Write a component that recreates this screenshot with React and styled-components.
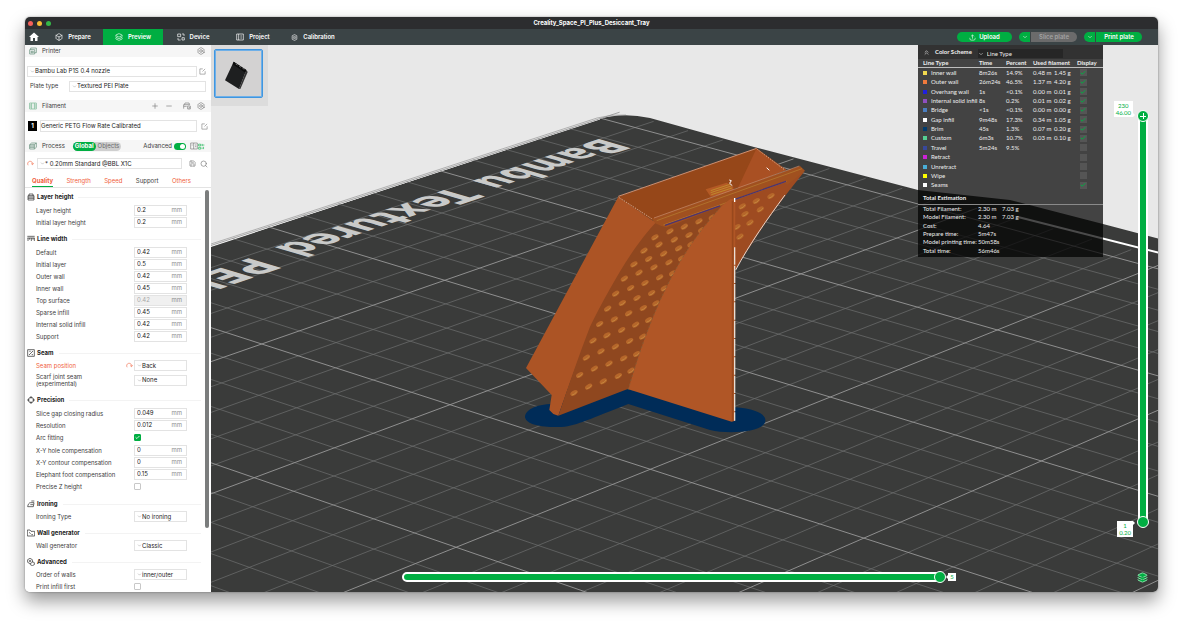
import React, { useState } from "react";
import styled, { createGlobalStyle, ThemeProvider, css } from "styled-components";
import {
  Bolt,
  Box,
  Check,
  ChevronDown,
  ChevronsUp,
  Layers,
  Minus,
  Plus,
  Save,
  Search,
} from "lucide-react";
import { MdHome } from "react-icons/md";

const theme = {
  colors: {
    green: "#00ae42",
    orange: "#f0603c",
    titlebar: "#2c2d2f",
    navbar: "#3b4446",
    text: "#3c3c3c",
    muted: "#8c8c8c",
    line: "#e3e3e3",
    header: "#f6f6f6",
  },
};

const GlobalStyle = createGlobalStyle`
  * { box-sizing: border-box; }
  body {
    margin: 0;
    background-color: #fff;
    font-family: Inter, "Liberation Sans", sans-serif;
    font-size: 6px;
    line-height: 8px;
    color: #3c3c3c;
  }
  button, input, select {
    font: inherit;
    color: inherit;
    margin: 0;
    padding: 0;
    border: 0;
    background: none;
  }
  svg { flex: none; display: block; }
`;

const App = () => {
  return (
    <ThemeProvider theme={theme}>
      <GlobalStyle />
      <Page>
        <Window>
          <TitleBar />
          <NavBar />
          <Main>
            <Sidebar />
            <Viewport />
          </Main>
        </Window>
      </Page>
    </ThemeProvider>
  );
};

export default App;

// [Glyph]--------------------------------------------------------------------------------------------
const shapes = {
  upload: "M12 16V3M7 8l5-5 5 5M3 13v3a5 5 0 0 0 5 5h8a5 5 0 0 0 5-5v-3",
  device: "M2 3h9v8H2zM15 14h7v7h-7zM15 3h6v6M3 15v6h8",
  project: "M2 3h20v18H2zM8 3v18M13 9h5M13 15h5",
  calibration: "M12 2l8 4v12l-8 4-8-4V6zM12 8a4 4 0 1 0 0 8a4 4 0 1 0 0-8M12 11v2",
  printer: "M2 8h15v13H2zM5 8V3h17v14h-5M6 13h7v4H6z",
  filament: "M2 3h20v18H2zM8 3v18M16 3v18M2 9h6M2 15h6M16 9h6M16 15h6",
  process: "M2 8h14v13H2zM2 8l6-5h14l-6 5M22 3v13l-6 5M2 12h14M2 16h14",
  edit: "M13 3H3v18h18V11M12 12l9-9",
  ams: "M2 20V8h18M4 8l2-5h12l2 5M2 13h9M14 12l8 0v9h-8zM16 17l2 2 3-4",
  compare: "M2 3h20v18H2zM11 3v18M15 9h4M15 14h4M5 9h3",
  params: "M2 4h7v6H2zM2 15h7v6H2zM14 3v8M14 7h8M14 15v6M19 13v8",
  reset: "M4 18a8.500 8.500 0 1 1 15-3M14 12l5 4 4-5",
  height: "M3 8h18v13H3zM3 12h18M3 16h18M6 8V3h12v5",
  width: "M1 4h22M1 9h22M3 9v9M8 9v5M13 9v9M18 9v5M22 9v9",
  seam: "M2 2h20v20H2zM6 18L18 6M7 7h4M14 17h4",
  precision: "M12 4a8 8 0 1 0 0 16a8 8 0 1 0 0-16M12 0v8M12 16v8M0 12h8M16 12h8",
  ironing: "M2 20h17l2-12H11C6 8 3 13 2 20zM10 14h9M13 3h9",
  wall: "M1 3h8l3 4h11v14H1zM6 10l5 4M13 17h5",
  advanced: "M9 1l7 4v8l-7 4-7-4V5zM9 6v6M6 9h6M16 11l6 3v6l-6 3-6-3v-3",
};

const Glyph = ({ name, size = 8, color = "currentColor" }) => {
  return (
    <svg width={size} height={size} viewBox="0 0 24 24" fill="none" stroke={color} strokeWidth="2">
      <path d={shapes[name]} />
    </svg>
  );
};

// [Window]--------------------------------------------------------------------------------------------
const Page = styled.div`
  display: flex;
  height: 100vh;
  padding: 17px 25px 33px;
`;

const Window = styled.div`
  display: flex;
  flex-direction: column;
  flex: 1;
  min-width: 0;
  overflow: hidden;
  border-radius: 5px;
  background-color: #fff;
  box-shadow: 0 9px 18px rgba(0, 0, 0, 0.4), 0 0 2px rgba(0, 0, 0, 0.4);
`;

const Main = styled.main`
  display: flex;
  flex: 1;
  min-height: 0;
`;

// [TitleBar]--------------------------------------------------------------------------------------------
const TitleBar = () => {
  return (
    <TitleBarWrapper>
      <Lights>
        <Light $color="#f4605a" />
        <Light $color="#f8bd35" />
        <Light $color="#35b747" />
      </Lights>
      <Title>Creality_Space_PI_Plus_Desiccant_Tray</Title>
    </TitleBarWrapper>
  );
};

const TitleBarWrapper = styled.header`
  display: grid;
  grid-template-columns: 1fr auto 1fr;
  align-items: center;
  flex: none;
  height: 12px;
  padding: 0 3px;
  background-color: ${({ theme }) => theme.colors.titlebar};
`;

const Lights = styled.div`
  display: flex;
  gap: 4px;
`;

const Light = styled.span`
  width: 5px;
  height: 5px;
  border-radius: 50%;
  background-color: ${({ $color }) => $color};
`;

const Title = styled.h1`
  margin: 0;
  font-size: 6px;
  font-weight: 700;
  color: #fff;
`;

// [NavBar]--------------------------------------------------------------------------------------------
const NavBar = () => {
  return (
    <NavWrapper>
      <HomeButton aria-label="Home">
        <MdHome size={12} />
      </HomeButton>
      <NavTab><Box size={8} />Prepare</NavTab>
      <NavTab $active><Layers size={8} />Preview</NavTab>
      <NavTab><Glyph name="device" />Device</NavTab>
      <NavTab><Glyph name="project" />Project</NavTab>
      <NavTab><Glyph name="calibration" size={7} />Calibration</NavTab>
      <Actions>
        <Pill><Glyph name="upload" size={7} />Upload</Pill>
        <SplitButton>
          <PillArrow aria-label="Slice options"><ChevronDown size={6} /></PillArrow>
          <PillEnd $disabled>Slice plate</PillEnd>
        </SplitButton>
        <SplitButton>
          <PillArrow aria-label="Print options"><ChevronDown size={6} /></PillArrow>
          <PillEnd>Print plate</PillEnd>
        </SplitButton>
      </Actions>
    </NavWrapper>
  );
};

const NavWrapper = styled.nav`
  display: flex;
  flex: none;
  height: 16px;
  background-color: ${({ theme }) => theme.colors.navbar};
  color: #fff;
`;

const HomeButton = styled.button`
  display: flex;
  justify-content: center;
  align-items: center;
  width: 18px;
`;

const NavTab = styled.button`
  display: flex;
  justify-content: center;
  align-items: center;
  gap: 5px;
  width: 60px;
  font-weight: 600;
  background-color: ${({ $active, theme }) => ($active ? theme.colors.green : "transparent")};
`;

const Actions = styled.div`
  display: flex;
  align-items: center;
  gap: 7px;
  margin-left: auto;
  padding-right: 16px;
`;

const SplitButton = styled.div`
  display: flex;
  gap: 1px;
`;

const pill = css`
  display: flex;
  justify-content: center;
  align-items: center;
  height: 10px;
  font-weight: 600;
  background-color: ${({ theme, $disabled }) => ($disabled ? "#6b6b6b" : theme.colors.green)};
  color: ${({ $disabled }) => ($disabled ? "#a3a3a3" : "#fff")};
`;

const Pill = styled.button`
  ${pill}
  gap: 3px;
  width: 55px;
  border-radius: 5px;
`;

const PillArrow = styled.button`
  ${pill}
  width: 11px;
  border-radius: 5px 0 0 5px;
`;

const PillEnd = styled.button`
  ${pill}
  width: 46px;
  border-radius: 0 5px 5px 0;
`;

// [Sidebar]--------------------------------------------------------------------------------------------
const groups = [
  {
    title: "Layer height",
    icon: "height",
    rows: [
      { label: "Layer height", value: "0.2" },
      { label: "Initial layer height", value: "0.2" },
    ],
  },
  {
    title: "Line width",
    icon: "width",
    rows: [
      { label: "Default", value: "0.42" },
      { label: "Initial layer", value: "0.5" },
      { label: "Outer wall", value: "0.42" },
      { label: "Inner wall", value: "0.45" },
      { label: "Top surface", value: "0.42", disabled: true },
      { label: "Sparse infill", value: "0.45" },
      { label: "Internal solid infill", value: "0.42" },
      { label: "Support", value: "0.42" },
    ],
  },
  {
    title: "Seam",
    icon: "seam",
    rows: [
      { label: "Seam position", option: "Back", changed: true },
      { label: "Scarf joint seam (experimental)", option: "None", tall: true },
    ],
  },
  {
    title: "Precision",
    icon: "precision",
    rows: [
      { label: "Slice gap closing radius", value: "0.049" },
      { label: "Resolution", value: "0.012" },
      { label: "Arc fitting", checked: true },
      { label: "X-Y hole compensation", value: "0" },
      { label: "X-Y contour compensation", value: "0" },
      { label: "Elephant foot compensation", value: "0.15" },
      { label: "Precise Z height", checked: false },
    ],
  },
  { title: "Ironing", icon: "ironing", rows: [{ label: "Ironing Type", option: "No ironing" }] },
  { title: "Wall generator", icon: "wall", rows: [{ label: "Wall generator", option: "Classic" }] },
  {
    title: "Advanced",
    icon: "advanced",
    rows: [
      { label: "Order of walls", option: "inner/outer" },
      { label: "Print infill first", checked: false },
    ],
  },
];

const Sidebar = () => {
  return (
    <SidebarWrapper>
      <PanelHeader>
        <Glyph name="printer" color="#5c8a72" />
        <PanelTitle>Printer</PanelTitle>
        <IconButton aria-label="Printer settings"><Bolt size={8} /></IconButton>
      </PanelHeader>
      <PrinterBody>
        <FieldRow>
          <ComboBox label="Printer preset" option="Bambu Lab P1S 0.4 nozzle" />
          <IconButton aria-label="Edit printer"><Glyph name="edit" size={7} /></IconButton>
        </FieldRow>
        <FieldRow>
          <PlateLabel htmlFor="plate">Plate type</PlateLabel>
          <ComboBox id="plate" label="Plate type" option="Textured PEI Plate" />
        </FieldRow>
      </PrinterBody>

      <PanelHeader>
        <Glyph name="filament" color="#6fb48d" />
        <PanelTitle>Filament</PanelTitle>
        <IconButton aria-label="Add filament"><Plus size={8} /></IconButton>
        <IconButton $gap={6} aria-label="Remove filament"><Minus size={8} /></IconButton>
        <IconButton $gap={10} aria-label="Sync filament"><Glyph name="ams" /></IconButton>
        <IconButton $gap={6} aria-label="Filament settings"><Bolt size={8} /></IconButton>
      </PanelHeader>
      <FilamentBody>
        <Spool>1</Spool>
        <FilamentName>Generic PETG Flow Rate Calibrated</FilamentName>
        <IconButton aria-label="Edit filament"><Glyph name="edit" size={7} /></IconButton>
      </FilamentBody>

      <PanelHeader>
        <Glyph name="process" color="#5c8a72" />
        <PanelTitle>Process</PanelTitle>
        <Scope>
          <ScopeButton $active>Global</ScopeButton>
          <ScopeButton>Objects</ScopeButton>
        </Scope>
        <AdvancedLabel htmlFor="advanced">Advanced</AdvancedLabel>
        <Toggle id="advanced" type="checkbox" defaultChecked />
        <IconButton $gap={4} aria-label="Compare presets"><Glyph name="compare" /></IconButton>
        <IconButton $green aria-label="Parameter list"><Glyph name="params" size={7} /></IconButton>
      </PanelHeader>
      <ProcessBody>
        <Glyph name="reset" size={7} color="#f0603c" />
        <ComboBox label="Process preset" option="* 0.20mm Standard @BBL X1C" />
        <IconButton $gap={4} aria-label="Save"><Save size={7} /></IconButton>
        <IconButton $gap={1} aria-label="Search"><Search size={8} /></IconButton>
      </ProcessBody>

      <Tabs>
        <Tab $active $changed>Quality</Tab>
        <Tab $changed>Strength</Tab>
        <Tab $changed>Speed</Tab>
        <Tab>Support</Tab>
        <Tab $changed>Others</Tab>
      </Tabs>

      <Settings>
        <GroupList>
          {groups.map((group) => (
            <Group key={group.title}>
              <GroupTitle>
                <Glyph name={group.icon} />
                {group.title}
              </GroupTitle>
              {group.rows.map((row) => (
                <Setting key={row.label} {...row} />
              ))}
            </Group>
          ))}
        </GroupList>
        <ScrollTrack>
          <ScrollThumb />
        </ScrollTrack>
      </Settings>
    </SidebarWrapper>
  );
};

const SidebarWrapper = styled.aside`
  display: flex;
  flex-direction: column;
  flex: none;
  width: 186px;
  overflow: hidden;
  background-color: #fff;
`;

const PanelHeader = styled.div`
  display: flex;
  align-items: center;
  flex: none;
  height: 12px;
  padding: 0 6px 0 4px;
  background-color: ${({ theme }) => theme.colors.header};
`;

const PanelTitle = styled.h2`
  margin: 0 auto 0 5px;
  font-size: 6px;
  font-weight: 400;
`;

const IconButton = styled.button`
  display: flex;
  margin-left: ${({ $gap = 0 }) => $gap}px;
  color: ${({ $green, theme }) => ($green ? theme.colors.green : "#7b7b7b")};
`;

const FieldRow = styled.div`
  display: flex;
  align-items: center;
  gap: 2px;
  height: 12px;
`;

const PrinterBody = styled.div`
  display: flex;
  flex-direction: column;
  flex: none;
  gap: 3px;
  padding: 8px 5px 8px 2px;
`;

const PlateLabel = styled.label`
  width: 40px;
  padding-left: 3px;
`;

const FilamentBody = styled.div`
  display: flex;
  align-items: center;
  flex: none;
  gap: 2px;
  padding: 8px 3px;
`;

const Spool = styled.span`
  width: 9px;
  height: 10px;
  line-height: 10px;
  font-weight: 700;
  text-align: center;
  color: #fff;
  background-color: #000;
`;

const FilamentName = styled.div`
  flex: 1;
  height: 12px;
  margin: 0 2px 0 1px;
  padding: 1px 0;
  color: #222;
  border: 1px solid ${({ theme }) => theme.colors.line};
`;

const ProcessBody = styled.div`
  display: flex;
  align-items: center;
  flex: none;
  gap: 3px;
  padding: 6px 3px 6px 2px;
`;

const Scope = styled.div`
  display: flex;
  margin-right: 22px;
  border-radius: 5px;
  background-color: #cfcfcf;
`;

const ScopeButton = styled.button`
  height: 9px;
  padding: 0 2px;
  border-radius: 5px;
  font-weight: ${({ $active }) => ($active ? 700 : 400)};
  color: ${({ $active }) => ($active ? "#fff" : "#6b6b6b")};
  background-color: ${({ $active, theme }) => ($active ? theme.colors.green : "transparent")};
`;

const AdvancedLabel = styled.label`
  margin-right: 2px;
`;

const Toggle = styled.input`
  appearance: none;
  display: flex;
  justify-content: flex-end;
  width: 12px;
  height: 7px;
  padding: 1px;
  border-radius: 4px;
  background-color: ${({ theme }) => theme.colors.green};

  &::after {
    content: "";
    width: 5px;
    height: 5px;
    border-radius: 50%;
    background-color: #fff;
  }
`;

const Tabs = styled.div`
  display: flex;
  justify-content: space-between;
  flex: none;
  height: 13px;
  padding: 0 20px 0 7px;
  border-bottom: 1px solid ${({ theme }) => theme.colors.line};
`;

const Tab = styled.button`
  height: 12px;
  font-weight: ${({ $active }) => ($active ? 700 : 400)};
  color: ${({ $changed, theme }) => ($changed ? theme.colors.orange : theme.colors.text)};
  border-bottom: 1px solid ${({ $active, theme }) => ($active ? theme.colors.green : "transparent")};
`;

// [Sidebar][ComboBox]--------------------------------------------------------------------------------------------
const ComboBox = ({ id, label, option }) => {
  return (
    <ComboWrapper>
      <ChevronDown size={5} color="#8c8c8c" />
      <Select id={id} aria-label={label} defaultValue={option}>
        <option>{option}</option>
      </Select>
    </ComboWrapper>
  );
};

const ComboWrapper = styled.div`
  display: flex;
  align-items: center;
  flex: 1;
  min-width: 0;
  height: 11px;
  padding-left: 2px;
  border: 1px solid ${({ theme }) => theme.colors.line};
`;

const Select = styled.select`
  appearance: none;
  flex: 1;
  min-width: 0;
  color: #222;
`;

// [Sidebar][Setting]--------------------------------------------------------------------------------------------
const Setting = ({ label, value, option, checked, changed, disabled, tall }) => {
  const id = label.toLowerCase().replace(/[^a-z]+/g, "-");
  const height = tall ? 18 : option ? 11 : value ? 12 : 13;

  return (
    <SettingRow $height={height}>
      <SettingLabel htmlFor={id} $changed={changed} $tall={tall}>{label}</SettingLabel>
      <ResetCell>{changed && <Glyph name="reset" size={7} color="#f0603c" />}</ResetCell>
      {value !== undefined && (
        <NumberBox $disabled={disabled}>
          <NumberInput id={id} defaultValue={value} disabled={disabled} />
          mm
        </NumberBox>
      )}
      {option && <ComboBox id={id} label={label} option={option} />}
      {checked !== undefined && (
        <TickCell>
          <Tick id={id} type="checkbox" defaultChecked={checked} />
          {checked && <TickMark size={5} strokeWidth={4} />}
        </TickCell>
      )}
    </SettingRow>
  );
};

const Settings = styled.div`
  display: flex;
  flex: 1;
  min-height: 0;
  padding-top: 2px;
`;

const GroupList = styled.div`
  flex: 1;
  overflow: hidden;
  padding-left: 2px;
`;

const ScrollTrack = styled.div`
  width: 6px;
`;

const ScrollThumb = styled.div`
  width: 4px;
  height: 84%;
  border-radius: 2px;
  background-color: #7b7d7d;
`;

const Group = styled.section`
  margin-bottom: 4px;
`;

const GroupTitle = styled.h3`
  display: flex;
  align-items: center;
  gap: 2px;
  height: 14px;
  margin: 0;
  font-size: 6px;
  font-weight: 700;
  color: #222;

  &::after {
    content: "";
    flex: 1;
    height: 1px;
    margin: 0 4px 0 3px;
    background-color: #f3f3f3;
  }
`;

const SettingRow = styled.div`
  display: grid;
  grid-template-columns: 90px 8px 53px;
  align-items: center;
  height: ${({ $height }) => $height}px;
  padding-left: 9px;
`;

const SettingLabel = styled.label`
  width: ${({ $tall }) => ($tall ? "60px" : "auto")};
  line-height: 7px;
  color: ${({ $changed, theme }) => ($changed ? theme.colors.orange : theme.colors.text)};
`;

const ResetCell = styled.span`
  display: flex;
`;

const NumberBox = styled.span`
  display: flex;
  align-items: center;
  height: 11px;
  padding: 0 4px 0 2px;
  border: 1px solid ${({ theme }) => theme.colors.line};
  background-color: ${({ $disabled }) => ($disabled ? "#f0f0f0" : "#fff")};
  color: ${({ theme }) => theme.colors.muted};
`;

const NumberInput = styled.input`
  flex: 1;
  width: 0;
  color: #222;

  &:disabled {
    color: #a8a8a8;
  }
`;

const TickCell = styled.span`
  display: grid;
  justify-items: start;
  align-items: center;
`;

const Tick = styled.input`
  appearance: none;
  grid-area: 1 / 1;
  width: 7px;
  height: 7px;
  border: 1px solid #c8c8c8;
  border-radius: 1px;

  &:checked {
    border-color: ${({ theme }) => theme.colors.green};
    background-color: ${({ theme }) => theme.colors.green};
  }
`;

const TickMark = styled(Check)`
  grid-area: 1 / 1;
  margin-left: 1px;
  color: #fff;
  pointer-events: none;
`;

// [Viewport]--------------------------------------------------------------------------------------------
const Viewport = () => {
  return (
    <ViewportWrapper>
      <Scene />
      <Plates>
        <PlateThumb aria-label="Plate 1">
          <svg width="47" height="47" viewBox="0 0 141 141">
            <path d="M56 35L94 60L72 117L30 91Z" fill="#1e1f20" />
            <path d="M56 35L94 60L91 68L53 43Z" fill="#0c0c0c" />
            <path d="M62 42l6 3m4 3l6 4m4 2l6 4" stroke="#9a9a9a" strokeWidth="2" />
            <path d="M94 60L98 66L76 117L72 117Z" fill="#333" />
          </svg>
        </PlateThumb>
      </Plates>
      <Legend />
      <LayerSlider />
      <MoveSlider />
      <LayersButton aria-label="Layers"><Layers size={11} /></LayersButton>
    </ViewportWrapper>
  );
};

const ViewportWrapper = styled.section`
  position: relative;
  flex: 1;
  min-width: 0;
  overflow: hidden;
  background-color: #e8e8e8;
`;

const Plates = styled.div`
  position: absolute;
  top: 0;
  left: 0;
  padding: 4px 5px 8px 3px;
  background-color: #dcdcdc;
`;

const PlateThumb = styled.button`
  display: block;
  border: 1px solid #3f96e0;
  border-radius: 2px;
  background-color: #d3d2d2;
  box-shadow: 0 0 0 1px #6fb0e8 inset;
`;

const LayersButton = styled.button`
  position: absolute;
  right: 10px;
  bottom: 9px;
  color: #8fe8b1;

  svg {
    fill: ${({ theme }) => theme.colors.green};
  }
`;

// [Viewport][Scene]--------------------------------------------------------------------------------------------
// a runs down-right and b up-right over the bed, one unit is 50 mm
const project = (a, b) => {
  const w = 1 - 0.03 * a + 0.036 * b;
  return [(261.7 + 174.8 * a + 199 * b) / w, (344 + 48.56 * a - 53.6 * b) / w];
};

const line = (from, to) => {
  const [x1, y1] = project(...from);
  const [x2, y2] = project(...to);
  return `M${x1.toFixed(2)} ${y1.toFixed(2)}L${x2.toFixed(2)} ${y2.toFixed(2)}`;
};

const BED = { aMin: -1, aMax: 4.12, bMin: -2, bMax: 3.12 };

const gridLines = () => {
  const thin = [];
  const bold = [];
  for (let i = 0; i <= 25; i++) {
    const a = BED.aMin + i / 5;
    const b = BED.bMin + i / 5;
    const list = i % 5 === 0 ? bold : thin;
    list.push(line([a, BED.bMin], [a, BED.bMax]));
    list.push(line([BED.aMin, b], [BED.aMax, b]));
  }
  return { thin: thin.join(""), bold: bold.join("") };
};

const holes = [
  [222, 789], [266, 770], [310, 754], [355, 738], [393, 722],
  [239, 735], [283, 716], [327, 701], [371, 685], [410, 672],
  [259, 683], [303, 664], [346, 650], [389, 633], [428, 620],
  [279, 632], [321, 616], [365, 600], [407, 584], [446, 570],
  [299, 582], [343, 568], [386, 550], [430, 534], [468, 520],
  [323, 536], [367, 519], [411, 504], [455, 489], [493, 475],
  [347, 491], [392, 474], [435, 459], [479, 442], [518, 430],
  [373, 446], [417, 428], [462, 412], [507, 397], [545, 385],
  [402, 403], [446, 387], [491, 371], [536, 355], [573, 343],
  [432, 362], [477, 344], [523, 329], [567, 315], [605, 300],
  [465, 322], [510, 304], [553, 290], [597, 274], [637, 262],
];

const wingHoles = [
  [727, 229], [769, 213], [813, 198], [735, 252],
  [781, 238], [711, 291], [750, 278], [720, 320],
];

const Scene = () => {
  const grid = gridLines();

  return (
    <SceneSvg viewBox="211 45 947 547" preserveAspectRatio="xMidYMid slice">
      <path
        d="M211 247L600 119Q622 112 650 118L754 147L918 190L1010 200L1103 224L1160 239V594H211Z"
        fill="#3a3b3a"
      />
      <path d="M211 244L597 118Q612 114 626 115" fill="none" stroke="#8a8a8a" strokeWidth="0.6" />
      <path d="M211 246L600 119" stroke="#fff" strokeWidth="1" />
      <path d={grid.thin} stroke="#6f7070" strokeWidth="0.7" />
      <path d={grid.bold} stroke="#989999" strokeWidth="0.9" />
      <path d="M1018 217L1160 253" stroke="#fff" strokeWidth="2" />
      <PlateText transform="matrix(-3.38 1.12 -4.35 -1.25 602 138)">Bambu</PlateText>
      <PlateText transform="matrix(-3.66 1.24 -4.4 -1.28 453 187)">Textured</PlateText>
      <PlateText transform="matrix(-3.8 1.3 -4.5 -1.35 252 257)">PEI</PlateText>
      <Model />
    </SceneSvg>
  );
};

const Model = () => {
  return (
    <g transform="translate(500 130) scale(0.3333)">
      <path
        d="M150 822C95 826 75 845 75 862C80 886 130 893 185 891C235 886 270 866 385 822L630 900C680 912 765 908 790 885C808 865 790 838 705 832L380 778Z"
        fill="#002c58"
      />
      <path d="M355 200L770 55L855 120L455 270Z" fill="#964719" />
      <path d="M770 55L860 120L712 178Z" fill="#a95023" />
      <path d="M617 178L680 158L700 172L700 185L632 200Z" fill="#b45a25" />
      <path d="M632 182L690 163M632 188L694 168M634 194L696 174" stroke="#c08a2c" strokeWidth="3" />
      <path
        d="M355 200L455 270L480 278C400 370 330 480 270 600C235 690 205 770 175 857L160 852L148 840L155 795L78 714Z"
        fill="#ac5425"
      />
      <path
        d="M470 275C400 345 325 480 270 590C235 680 205 770 175 857L385 776L700 215L660 220Z"
        fill="#8f471f"
      />
      <path d="M700 205L862 150L914 124C860 190 800 270 750 350L705 420Z" fill="#9e4b21" />
      <path d="M855 195C800 270 750 340 707 420" fill="none" stroke="#e3d6cf" strokeWidth="3" />
      {[...holes, ...wingHoles].map(([x, y]) => (
        <g key={`${x}-${y}`} transform={`translate(${x} ${y}) rotate(-32)`}>
          <ellipse rx="12" ry="7" fill="#b5662a" />
          <path d="M-9 2Q0 6 9 1" stroke="#c99045" strokeWidth="2" fill="none" />
        </g>
      ))}
      <path d="M455 266L900 108L915 122L862 165L850 156L500 292L484 288L466 280Z" fill="#a0501f" />
      <path d="M470 272L906 116" stroke="#b0702c" strokeWidth="3" />
      <path d="M490 285L860 154" stroke="#b0702c" strokeWidth="3" />
      <path d="M495 286L660 228M705 208L858 154" stroke="#4b3472" strokeWidth="4" />
      <path d="M462 264L898 108" stroke="#c98f72" strokeWidth="2" />
      <path
        d="M665 228L692 206L706 210L705 872L695 875L385 778C410 690 450 570 500 470C560 350 610 290 665 228Z"
        fill="#b05626"
      />
      <path d="M385 778C410 690 450 570 500 470C560 350 610 290 665 228" fill="none" stroke="#8a5a33" strokeWidth="3" strokeDasharray="6 7" />
      <path d="M698 212V872" stroke="#98481d" strokeWidth="5" />
      <path d="M704 352V872" stroke="#eadfd6" strokeWidth="4" strokeDasharray="52 3" />
      <path d="M704 204V216" stroke="#fff" strokeWidth="4" />
      <path d="M355 199L770 55" stroke="#cf9070" strokeWidth="3" />
      <path d="M358 203L455 266M772 58L852 118" stroke="#d8a98c" strokeWidth="3" strokeDasharray="4 4" />
      <path d="M688 150L694 152L689 160L697 167M800 113L808 121" stroke="#fff" strokeWidth="3" fill="none" />
    </g>
  );
};

const SceneSvg = styled.svg`
  width: 100%;
  height: 100%;
`;

const PlateText = styled.text`
  font-family: "DejaVu Sans", sans-serif;
  font-size: 10px;
  font-weight: 700;
  fill: #c9cac9;
`;

// [Viewport][Legend]--------------------------------------------------------------------------------------------
const lineTypes = [
  { name: "Inner wall", color: "#f2d94f", time: "8m26s", percent: "14.9%", length: "0.48 m", weight: "1.45 g", on: true },
  { name: "Outer wall", color: "#f07a3c", time: "26m24s", percent: "46.5%", length: "1.37 m", weight: "4.20 g", on: true },
  { name: "Overhang wall", color: "#2020e0", time: "1s", percent: "<0.1%", length: "0.00 m", weight: "0.01 g", on: true },
  { name: "Internal solid infill", color: "#8f4fc0", time: "8s", percent: "0.2%", length: "0.01 m", weight: "0.02 g", on: true },
  { name: "Bridge", color: "#4b7fc0", time: "<1s", percent: "<0.1%", length: "0.00 m", weight: "0.00 g", on: true },
  { name: "Gap infill", color: "#ffffff", time: "9m48s", percent: "17.3%", length: "0.34 m", weight: "1.05 g", on: true },
  { name: "Brim", color: "#003b6e", time: "45s", percent: "1.3%", length: "0.07 m", weight: "0.20 g", on: true },
  { name: "Custom", color: "#55cf93", time: "6m3s", percent: "10.7%", length: "0.03 m", weight: "0.10 g", on: true },
  { name: "Travel", color: "#38489b", time: "5m24s", percent: "9.5%" },
  { name: "Retract", color: "#cd22d6" },
  { name: "Unretract", color: "#49add6" },
  { name: "Wipe", color: "#ffff00" },
  { name: "Seams", color: "#ffffff", on: true },
];

const totals = [
  ["Total Filament:", "2.30 m", "7.03 g"],
  ["Model Filament:", "2.30 m", "7.03 g"],
  ["Cost:", "4.64"],
  ["Prepare time:", "5m47s"],
  ["Model printing time:", "50m58s"],
  ["Total time:", "56m46s"],
];

const Legend = () => {
  return (
    <LegendWrapper>
      <LegendHeader>
        <ChevronsUp size={7} />
        <LegendTitle htmlFor="scheme">Color Scheme</LegendTitle>
        <SchemeBox>
          <ChevronDown size={6} />
          <SchemeSelect id="scheme" defaultValue="Line Type">
            <option>Line Type</option>
          </SchemeSelect>
        </SchemeBox>
      </LegendHeader>
      <LineTable>
        <colgroup>
          <col width="61" />
          <col width="27" />
          <col width="27" />
          <col width="21" />
          <col width="23" />
          <col />
        </colgroup>
        <thead>
          <tr>
            <th>Line Type</th>
            <th>Time</th>
            <th>Percent</th>
            <th colSpan={2}>Used filament</th>
            <th>Display</th>
          </tr>
        </thead>
        <tbody>
          {lineTypes.map((type) => (
            <LineRow key={type.name} type={type} />
          ))}
        </tbody>
      </LineTable>
      <TotalTitle>Total Estimation</TotalTitle>
      <TotalTable>
        <tbody>
          {totals.map(([name, first, second]) => (
            <tr key={name}>
              <td>{name}</td>
              <td>{first}</td>
              <td>{second}</td>
            </tr>
          ))}
        </tbody>
      </TotalTable>
    </LegendWrapper>
  );
};

const LineRow = ({ type }) => {
  const [on, setOn] = useState(Boolean(type.on));

  return (
    <tr>
      <td>
        <LineName>
          <Swatch $color={type.color} />
          {type.name}
        </LineName>
      </td>
      <td>{type.time}</td>
      <td>{type.percent}</td>
      <td>{type.length}</td>
      <td>{type.weight}</td>
      <td>
        <DisplayCell>
          <DisplayBox type="checkbox" aria-label={type.name} checked={on} onChange={() => setOn(!on)} />
          {on && <DisplayMark size={6} strokeWidth={4} />}
        </DisplayCell>
      </td>
    </tr>
  );
};

const LegendWrapper = styled.div`
  position: absolute;
  top: 0;
  right: 55px;
  width: 185px;
  padding-bottom: 2px;
  font-family: Lato, sans-serif;
  color: #eee;
  background-color: rgba(0, 0, 0, 0.71);
`;

const LegendHeader = styled.div`
  display: flex;
  align-items: center;
  height: 14px;
  padding: 0 40px 0 5px;
  background-color: rgba(0, 0, 0, 0.25);
`;

const LegendTitle = styled.label`
  margin: 0 6px 0 5px;
  font-weight: 700;
`;

const SchemeBox = styled.div`
  display: flex;
  align-items: center;
  flex: 1;
  height: 9px;
  margin-top: 3px;
  background-color: #262626;
`;

const SchemeSelect = styled.select`
  appearance: none;
  flex: 1;
  padding-left: 3px;
`;

const LineTable = styled.table`
  width: 100%;
  height: 131px;
  table-layout: fixed;
  border-collapse: collapse;
  white-space: nowrap;

  th, td {
    padding: 0;
    text-align: left;
    line-height: 8px;
  }

  th:first-child, td:first-child {
    padding-left: 5px;
  }

  thead tr {
    border-bottom: 1px solid #bdbdbd;
  }
`;

const LineName = styled.span`
  display: flex;
  align-items: center;
  gap: 4px;
`;

const Swatch = styled.i`
  flex: none;
  width: 4px;
  height: 4px;
  background-color: ${({ $color }) => $color};
`;

const DisplayCell = styled.span`
  display: grid;
  justify-items: start;
  align-items: center;
  padding-left: 3px;
`;

const DisplayBox = styled.input`
  appearance: none;
  grid-area: 1 / 1;
  width: 7px;
  height: 7px;
  background-color: #555;
`;

const DisplayMark = styled(Check)`
  z-index: 1;
  grid-area: 1 / 1;
  color: ${({ theme }) => theme.colors.green};
  pointer-events: none;
`;

const TotalTitle = styled.h2`
  margin: 0;
  padding: 4px 0 2px 5px;
  font-size: 6px;
  font-weight: 700;
  border-bottom: 1px solid #8a8a8a;
`;

const TotalTable = styled.table`
  height: 50px;
  margin-left: 5px;
  border-collapse: collapse;
  white-space: nowrap;

  td {
    width: 24px;
    padding: 0;
    line-height: 8px;
  }

  td:first-child {
    width: 55px;
  }
`;

// [Viewport][Sliders]--------------------------------------------------------------------------------------------
const LayerSlider = () => {
  return (
    <LayerTrack>
      <LayerRange type="range" min="1" max="230" defaultValue="230" aria-label="Top layer" $plus />
      <LayerRange type="range" min="1" max="230" defaultValue="1" aria-label="Bottom layer" />
      <LayerTag $top>230<br />46.00</LayerTag>
      <LayerTag>1<br />0.20</LayerTag>
    </LayerTrack>
  );
};

const MoveSlider = () => {
  return (
    <MoveTrack>
      <MoveRange type="range" min="1" max="5" defaultValue="5" aria-label="Move" />
      <MoveTag>5</MoveTag>
    </MoveTrack>
  );
};

const track = css`
  position: absolute;
  display: grid;
  border: 2px solid #fff;
  border-radius: 5px;
  background-color: ${({ theme }) => theme.colors.green};
`;

const thumb = css`
  appearance: none;
  width: 12px;
  height: 12px;
  border: 1px solid #fff;
  border-radius: 50%;
  background-color: ${({ theme }) => theme.colors.green};
`;

const LayerTrack = styled.div`
  ${track}
  top: 66px;
  right: 10px;
  bottom: 65px;
  width: 10px;
`;

const LayerRange = styled.input`
  appearance: none;
  grid-area: 1 / 1;
  writing-mode: vertical-lr;
  direction: rtl;
  width: 12px;
  margin: -3px;
  pointer-events: none;

  &::-webkit-slider-thumb {
    ${thumb}
    pointer-events: auto;
    ${({ $plus }) =>
      $plus &&
      css`
        background-image: linear-gradient(#fff, #fff), linear-gradient(#fff, #fff);
        background-size: 6px 1px, 1px 6px;
        background-position: center;
        background-repeat: no-repeat;
      `}
  }
`;

const MoveTrack = styled.div`
  ${track}
  right: 213px;
  bottom: 10px;
  left: 191px;
  height: 10px;
`;

const MoveRange = styled.input`
  appearance: none;
  grid-area: 1 / 1;
  height: 12px;
  margin: -3px;

  &::-webkit-slider-thumb {
    ${thumb}
  }
`;

const tag = css`
  position: absolute;
  font-family: Lato, sans-serif;
  text-align: center;
  color: ${({ theme }) => theme.colors.green};
  background-color: #fff;

  &::after {
    content: "";
    position: absolute;
    border: 2px solid transparent;
  }
`;

const LayerTag = styled.span`
  ${tag}
  right: 13px;
  ${({ $top }) => ($top ? "top: -12px;" : "bottom: -12px;")}
  padding: 1px 2px;
  line-height: 7px;

  &::after {
    left: 100%;
    ${({ $top }) => ($top ? "bottom: 0;" : "top: 0;")}
    border-left-color: #fff;
  }
`;

const MoveTag = styled.span`
  ${tag}
  top: -1px;
  right: -13px;
  width: 8px;

  &::after {
    top: 2px;
    right: 100%;
    border-right-color: #fff;
  }
`;
